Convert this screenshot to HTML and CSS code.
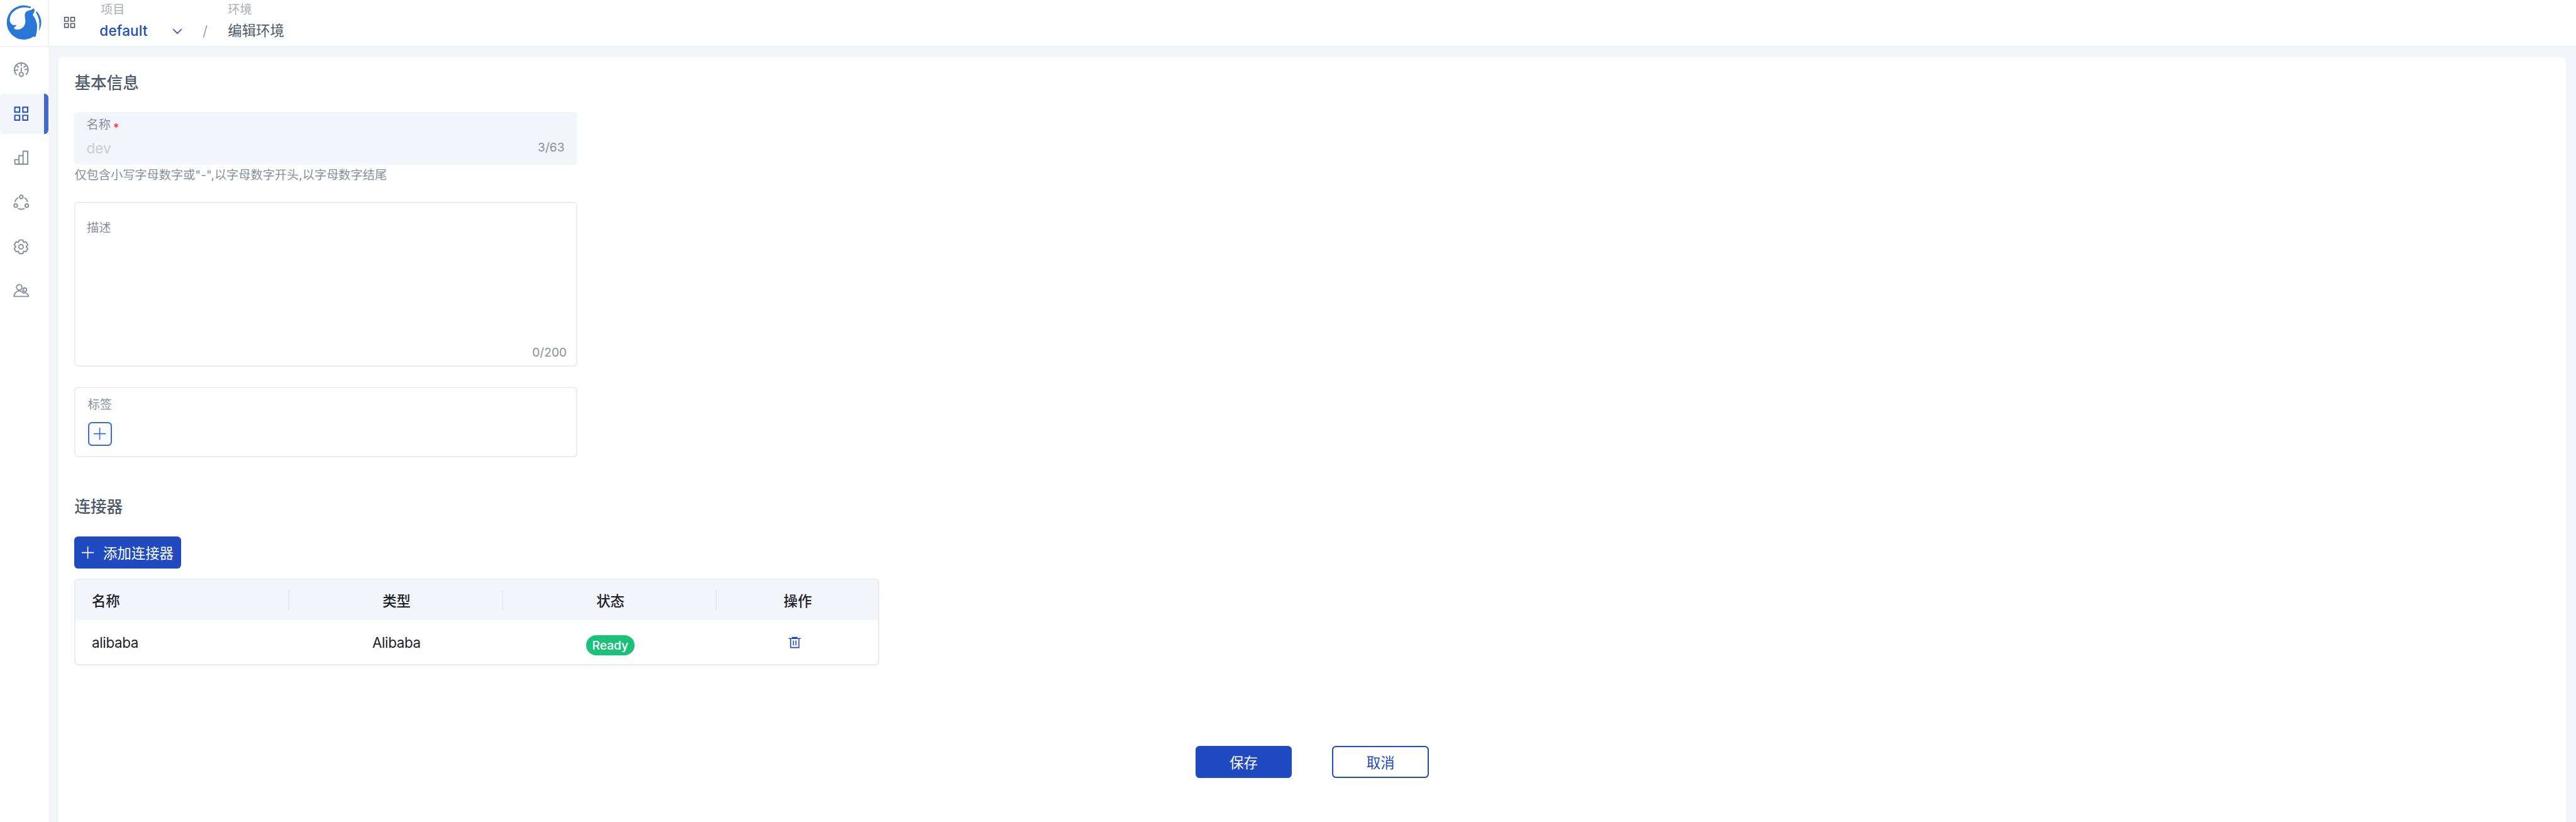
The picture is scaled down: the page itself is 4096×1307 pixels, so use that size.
FILE: index.html
```html
<!DOCTYPE html>
<html lang="zh-CN">
<head>
<meta charset="utf-8">
<title>编辑环境</title>
<link rel="stylesheet" href="styles.css">
</head>
<body>
<div class="app">
  <header class="header">
    <div class="brand">
      <svg class="logo" viewBox="0 0 96 92" fill="#2a78d6">
        <path d="M61.7 13.8A34 34 0 1 0 67.3 72.2L69.3 74.4L71.4 71Q74 62 73.8 52Q73.400 40 65.300 30.300Q65 28.500 66.500 26.500Q69.800 22 68.200 18Q67 16.200 65.500 17.500Q62 20.300 57 20.800Q49.500 22.500 49.200 30Q49.400 34 50.400 40Q51 48 46.500 53.500Q41 59.200 34 58.800Q28.500 58.600 28 56Q27.900 54.600 29.500 53.800Q32 52.500 32.800 49.200Q28 50.800 24.500 49Q19.300 46 19.400 38Q20 28 29.500 21Q43 11.500 60.400 16.500Z"/>
        <path d="M71.2 24Q71.400 22.600 73.300 22.800Q82.500 33 82 46.500Q81.600 54 77.600 61.700Q77.200 60 78 55Q80 38 71.200 24Z"/>
      </svg>
    </div>
    <div class="topbar">
      <svg class="ico-apps" viewBox="0 0 24 24" fill="none" stroke="#4e5969" stroke-width="2"><path d="M2 2h7.600v7.600H2zM14.400 2H22v7.600h-7.600zM2 14.400h7.600V22H2zM14.400 14.400H22V22h-7.600z"/></svg>
      <div class="crumb project">
        <span class="crumb-label">项目</span>
        <span class="crumb-value select">default
          <svg class="ico-down" viewBox="0 0 20 12" fill="none" stroke="#204abf" stroke-width="2"><path d="M1.500 1.500L10 10L18.500 1.500"/></svg>
        </span>
      </div>
      <span class="slash">/</span>
      <div class="crumb">
        <span class="crumb-label">环境</span>
        <span class="crumb-value">编辑环境</span>
      </div>
    </div>
  </header>
  <div class="body">
    <nav class="sidebar">
      <a class="nav-item"><svg viewBox="0 0 32 32"><path d="M7 26.200A13.600 13.600 0 1 1 25 26.200M16 3V9M7 8L11.300 11.600M25 8L20.700 11.600M2.800 18L10 16.200M22.500 15.700H29.500M16 11.500V21"/><circle cx="16" cy="25.400" r="4"/></svg></a>
      <a class="nav-item active"><svg viewBox="0 0 32 32"><path d="M3.200 3.200h9.600v9.600H3.200zM19.200 3.200h9.600v9.600H19.200zM3.200 19.200h9.600v9.600H3.200zM19.200 19.200h9.600v9.600H19.200z"/></svg></a>
      <a class="nav-item"><svg viewBox="0 0 32 32"><path d="M3.200 28.800V19.800H11.400M11.400 28.800V11.800H19.600M19.600 28.800V3.200H28.800V28.800H3.200"/></svg></a>
      <a class="nav-item"><svg viewBox="0 0 32 32"><circle cx="16" cy="5" r="3.400"/><circle cx="5" cy="22.500" r="3.400"/><circle cx="27" cy="22.500" r="3.400"/><path d="M3.500 15.300Q4.800 9.500 9.500 6.500M28.500 15.300Q27.200 9.500 22.500 6.500M9.500 28Q16 31.300 22.500 28"/></svg></a>
      <a class="nav-item"><svg class="gear" viewBox="0 0 48 48"><path d="M18.797 6.732A1 1 0 0 1 19.760 6h8.480a1 1 0 0 1 .964.732l1.285 4.628a1 1 0 0 0 1.213.7l4.651-1.200a1 1 0 0 1 1.116.468l4.240 7.344a1 1 0 0 1-.153 1.200L38.193 23.300a1 1 0 0 0 0 1.402l3.364 3.427a1 1 0 0 1 .153 1.200l-4.240 7.344a1 1 0 0 1-1.116.468l-4.650-1.200a1 1 0 0 0-1.214.7l-1.285 4.628a1 1 0 0 1-.964.732h-8.480a1 1 0 0 1-.963-.732L17.510 36.640a1 1 0 0 0-1.213-.7l-4.650 1.200a1 1 0 0 1-1.116-.468l-4.240-7.344a1 1 0 0 1 .153-1.200L9.809 24.700a1 1 0 0 0 0-1.402l-3.364-3.427a1 1 0 0 1-.153-1.200l4.240-7.344a1 1 0 0 1 1.116-.468l4.650 1.200a1 1 0 0 0 1.213-.7l1.286-4.628Z"/><circle cx="24" cy="24" r="6"/></svg></a>
      <a class="nav-item"><svg viewBox="0 0 32 32"><circle cx="12" cy="8.500" r="5.400"/><circle cx="23" cy="13.200" r="3.600"/><path d="M1.700 26.700C1.800 20.500 6 15.800 12 15.800C15.500 15.800 18.200 17.300 20.200 20C25 18.300 29.800 21.200 30.300 26.700Z"/></svg></a>
    </nav>
    <main class="card">
      <h2 class="title">基本信息</h2>
      <div class="field name-field">
        <div class="label">名称<svg class="required" viewBox="0 0 9 9" stroke="#f53f3f" stroke-width="1.900"><path d="M4.500 0V9M.6 2.300L8.400 6.700M8.400 2.300L.6 6.700"/></svg></div>
        <div class="input-row"><span class="value">dev</span><span class="count">3/63</span></div>
      </div>
      <p class="help">仅包含小写字母数字或"-",以字母数字开头,以字母数字结尾</p>
      <div class="field desc-field">
        <div class="label">描述</div>
        <span class="count">0/200</span>
      </div>
      <div class="field tag-field">
        <div class="label">标签</div>
        <button class="add-tag"><svg class="ico-plus" viewBox="0 0 24 24" stroke="#4369cb" stroke-width="2"><path d="M12 0V24M0 12H24"/></svg></button>
      </div>
      <h2 class="title connectors">连接器</h2>
      <button class="btn primary add"><svg class="ico-plus" viewBox="0 0 24 24" stroke="#fff" stroke-width="2"><path d="M12 0V24M0 12H24"/></svg>添加连接器</button>
      <div class="table">
        <div class="row head"><span>名称</span><span>类型</span><span>状态</span><span>操作</span></div>
        <div class="row data">
          <span>alibaba</span><span>Alibaba</span>
          <span><em class="badge">Ready</em></span>
          <span><svg class="ico-trash" viewBox="0 0 24 24" fill="none" stroke="#204abf" stroke-width="2"><path d="M0 4H24M7.500 4V2H16.500V4M4 4V22H20.500V4M9.500 8V17.500M14.500 8V17.500"/></svg></span>
        </div>
      </div>
      <div class="actions">
        <button class="btn primary">保存</button>
        <button class="btn outline">取消</button>
      </div>
    </main>
  </div>
</div>
</body>
</html>
```

FILE: styles.css
```css
html { font-size: 8px; }
* { box-sizing: border-box; }
body {
  margin: 0;
  overflow: hidden;
  background: #f2f5fa;
  color: #1d2129;
  font-family: Inter, "Noto Sans CJK SC", sans-serif;
  font-size: 2.8rem;
}
svg { display: block; flex: none; overflow: visible; }
button { font: inherit; padding: 0; border: 0; }

.app { display: flex; flex-direction: column; height: 100vh; }

.header {
  display: flex;
  flex: none;
  height: 9.4rem;
  background: #fff;
  border-bottom: 2px solid #f1f2f4;
}
.brand { width: 9.8rem; border-right: 2px solid #f1f2f4; }
.logo { width: 9.6rem; height: 9.2rem; }
.topbar { display: flex; flex: 1; padding-left: 2.8rem; }
.ico-apps { width: 2.4rem; height: 2.4rem; margin-top: 3.3rem; }
.crumb { display: flex; flex-direction: column; }
.crumb-label { height: 3.8rem; line-height: 3.8rem; font-size: 2.4rem; color: #a9aeb8; }
.crumb-value { height: 4.8rem; line-height: 4.8rem; color: #4e5969; }
.project { width: 16.4rem; margin-left: 4.8rem; }
.project .crumb-label { padding-left: 0.2rem; }
.select {
  display: flex;
  align-items: center;
  justify-content: space-between;
  color: #204abf;
  font-weight: 500;
  letter-spacing: 0.01em;
}
.ico-down { width: 2rem; height: 1.2rem; }
.slash { width: 5rem; margin: 3.8rem 0 0 4.1rem; line-height: 4.8rem; font-weight: 300; color: #86909c; }

.body { display: flex; flex: 1; min-height: 0; }
.sidebar {
  display: flex;
  flex-direction: column;
  gap: 0.8rem;
  flex: none;
  width: 9.6rem;
  padding-top: 0.4rem;
  background: #fff;
}
.nav-item {
  display: flex;
  align-items: center;
  justify-content: center;
  height: 8rem;
  padding-right: 1.2rem;
  border-radius: 0.8rem;
}
.nav-item svg { width: 3.2rem; height: 3.2rem; fill: none; stroke: #86909c; stroke-width: 2.4; }
.nav-item .gear { width: 3.6rem; height: 3.6rem; stroke-width: 3.2; }
.nav-item.active { background: linear-gradient(to right, #f2f5fa 8.8rem, #4369cb 8.8rem); }
.nav-item.active svg { stroke: #204abf; }

.card {
  display: flex;
  flex-direction: column;
  align-items: flex-start;
  flex: 1;
  margin: 2rem 2rem 0;
  padding: 3.1rem 3.2rem 0;
  background: #fff;
  border-radius: 0.8rem 0.8rem 0 0;
}
.title { margin: 0; font-size: 3.2rem; font-weight: 500; line-height: 4rem; color: #4e5969; }
.field { width: 100rem; border: 2px solid #ededed; border-radius: 0.8rem; }
.label { display: flex; align-items: center; font-size: 2.4rem; line-height: 3.2rem; color: #86909c; }
.count { font-size: 2.4rem; line-height: 3.2rem; color: #86909c; }

.name-field {
  height: 10.4rem;
  margin-top: 3.8rem;
  padding: 1rem 2.6rem 0 2.4rem;
  border: 0;
  background: #f2f5fa;
}
.required { width: 0.9rem; height: 0.9rem; margin-left: 0.6rem; }
.input-row { display: flex; justify-content: space-between; align-items: center; height: 4rem; margin-top: 0.9rem; }
.value { color: #c9cdd4; }
.help { margin: 0.6rem 0 0; font-size: 2.4rem; line-height: 3.2rem; color: #86909c; }

.desc-field {
  display: flex;
  flex-direction: column;
  justify-content: space-between;
  height: 32.8rem;
  margin-top: 3.6rem;
  padding: 3.4rem 1.9rem 0.95rem 2.2rem;
}
.desc-field .count { align-self: flex-end; }

.tag-field { height: 14rem; margin-top: 4rem; padding: 1.7rem 2.4rem 0; }
.add-tag {
  display: flex;
  align-items: center;
  justify-content: center;
  width: 4.8rem;
  height: 4.8rem;
  margin-top: 1.8rem;
  border: 2px solid #4369cb;
  border-radius: 0.8rem;
  background: #f7faff;
}
.ico-plus { width: 2.4rem; height: 2.4rem; }

.connectors { margin-top: 7.8rem; }
.btn {
  display: flex;
  align-items: center;
  justify-content: center;
  width: 19.2rem;
  height: 6.4rem;
  border-radius: 0.8rem;
}
.primary { background: #204abf; color: #fff; }
.outline { border: 2px solid #204abf; background: #fff; color: #204abf; }
.add { width: 21.2rem; gap: 1.8rem; margin-top: 3.9rem; }

.table {
  width: 160rem;
  height: 17.2rem;
  margin-top: 2rem;
  overflow: hidden;
  border: 2px solid #ebebeb;
  border-radius: 0.8rem;
}
.row {
  display: grid;
  grid-template-columns: 42.5rem 42.5rem 42.5rem 1fr;
  align-items: center;
  height: 8.8rem;
}
.row > span { display: flex; align-items: center; justify-content: center; height: 4rem; }
.head { height: 8rem; background: #f2f5fa; font-weight: 500; }
.head > span:not(:last-child) { padding-left: 0.3rem; border-right: 2px solid #e8eaed; }
.row > span:first-child { justify-content: flex-start; padding-left: 3.2rem; }
.data { letter-spacing: -0.015em; }
.badge {
  width: 9.6rem;
  height: 4rem;
  margin-top: 1.2rem;
  border-radius: 2rem;
  background: #1bc079;
  color: #fff;
  font-size: 2.4rem;
  font-style: normal;
  font-weight: 500;
  letter-spacing: 0;
  line-height: 4rem;
  text-align: center;
}
.ico-trash { width: 2.4rem; height: 2.4rem; margin-right: 1.1rem; }

.actions { display: flex; gap: 8rem; align-self: center; margin-top: 16rem; }
```
